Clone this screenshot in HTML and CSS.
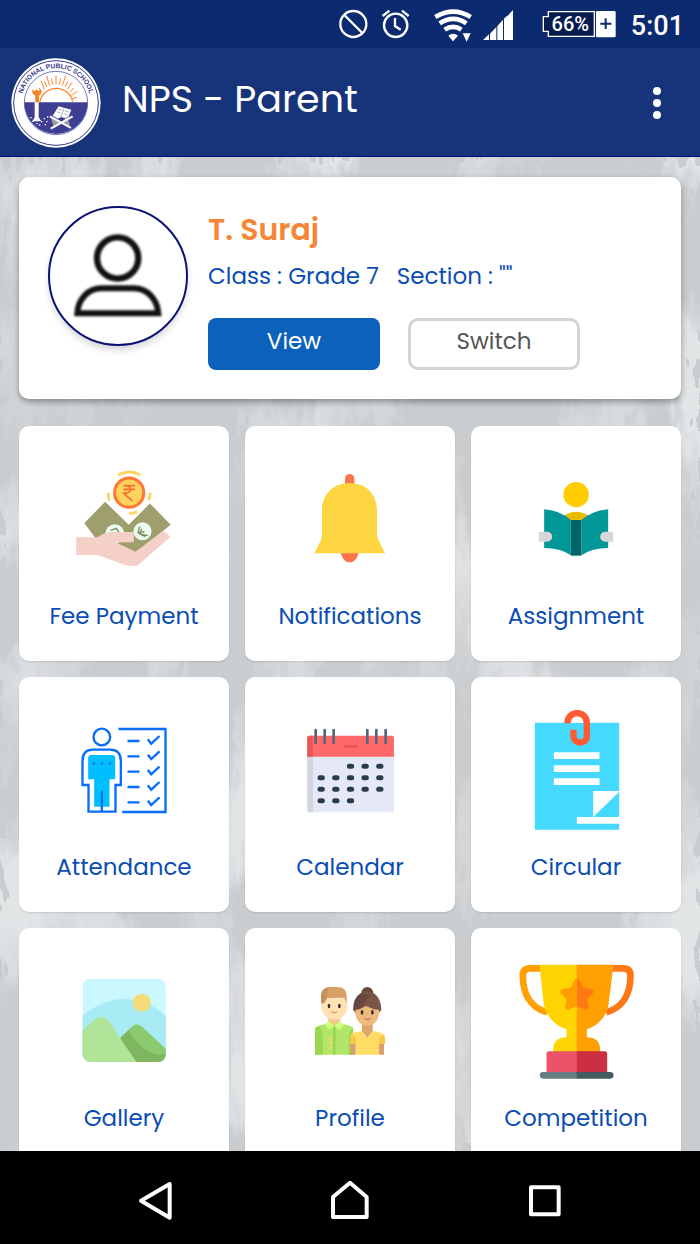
FILE: index.html
```html
<!DOCTYPE html>
<html lang="en">
<head>
<meta charset="utf-8">
<meta name="viewport" content="width=device-width, initial-scale=1">
<title>NPS - Parent</title>
<link rel="stylesheet" href="styles.css">
</head>
<body class="app">
<div class="status">
  <svg class="status-icon" viewBox="24 24 96 102" width="32" height="34" fill="none" stroke="#fff" stroke-width="7"><circle cx="70" cy="72" r="39"/><path d="M43 45l54 54"/></svg>
  <svg class="status-icon" viewBox="150 24 96 102" width="32" height="34" fill="none" stroke="#fff" stroke-width="7"><circle cx="197" cy="76" r="35"/><path d="M195 54v24l17 11M158 48l20-16M236 48l-20-16"/></svg>
  <svg class="status-icon status-wifi" viewBox="309 24 120 102" width="40" height="34"><g fill="none" stroke="#fff" stroke-width="14"><path d="M316 51q54-32 106 0"/><path d="M329 70q41-27 80 0"/><path d="M344 89q26-17 50 0"/></g><path d="M355 107q14-12 29 0l-15 17zM398 100h24l-12 25z" fill="#fff"/></svg>
  <svg class="status-icon" viewBox="459 24 90 102" width="30" height="34" fill="#fff"><path d="M459 120l18-17v17zM480 101l19-20v39h-19zM502 78l17-19v61h-17zM522 56l8-8v72h-8zM530 50l19-20v90h-22V56z"/></svg>
  <svg class="status-icon status-battery" viewBox="633 24 228 102" width="76" height="34"><path d="M655 35h138v74H655V94h-15V50h15z" fill="#071c4e" stroke="#fff" stroke-width="4"/><rect x="798" y="33" width="59" height="79" rx="4" fill="#fff"/><path d="M811 71h33M827 55v32" stroke="#0a2a70" stroke-width="6"/><text class="battery-text" x="721" y="94" text-anchor="middle">66%</text></svg>
  <span class="clock">5:01</span>
</div>
<header class="header">
  <svg class="logo" viewBox="15 22 276 276" width="92" height="92" role="img" aria-label="National Public School">
    <circle cx="153" cy="160" r="134" fill="#fff"/>
    <circle cx="153" cy="160" r="127" fill="none" stroke="#34378c" stroke-width="3"/>
    <path id="arc" d="M52 184A104 104 0 1 1 254 184" fill="none"/>
    <text class="logo-text"><textPath href="#arc" startOffset="50%" text-anchor="middle">NATIONAL PUBLIC SCHOOL</textPath></text>
    <circle cx="153" cy="160" r="95" fill="#fff"/>
    <circle cx="153" cy="160" r="95" fill="none" stroke="#34378c" stroke-width="2"/>
    <path d="M58 158h190a95 95 0 0 1-190 0z" fill="#3e3f93"/>
    <g fill="none" stroke="#ff8427" stroke-width="3"><path d="M105 156a50 50 0 0 1 98 0" stroke-width="4"/><path d="M111 127l-9-12M118 119l-10-26M126 112l-8-17M134 108l-9-29M143 105l-4-18M153 104V78M163 105l4-18M172 108l10-29M180 112l9-17M188 119l13-21M195 127l11-12M199 137l18-12M202 147l14-4"/></g>
    <path d="M82 119l7 6 5-6 6 5 8-5v14l-6 5v20H91v-20l-9-7z" fill="#f58220"/>
    <path d="M89 158h12v45l8 12H82l7-12z" fill="#fff"/>
    <path d="M143 198l18-28 18 5 20 5-11 27-20-5-9 5z" fill="#fff"/>
    <path d="M177 177l-10 27M161 179l9 2M157 187l9 2M181 184l9 3M178 192l9 3" stroke="#777a9c" stroke-width="2"/>
    <path d="M137 202l10 34 24-16 25 14-8-34-17 16z" fill="#9b9ca6"/>
    <path d="M135 200l63 35M203 200l-66 37" stroke="#fff" stroke-width="6"/>
    <path d="M76 204h4M82 215h4M94 222h4M108 216h4M119 225h4M116 207h4M124 216h4M102 226h4M126 202h4" stroke="#fff" stroke-width="4"/>
  </svg>
  <h1 class="title">NPS - Parent</h1>
  <button class="menu" type="button" aria-label="Menu"><svg viewBox="0 0 12 36" width="12" height="36" fill="#fff"><circle cx="6" cy="6" r="4"/><circle cx="6" cy="18" r="4"/><circle cx="6" cy="30" r="4"/></svg></button>
</header>
<div class="stage">
  <svg class="texture" width="100%" height="100%" aria-hidden="true">
    <filter id="plaster" x="0" y="0" width="100%" height="100%">
      <feTurbulence type="fractalNoise" baseFrequency="0.011 0.006" numOctaves="2" seed="8" result="patch"/>
      <feTurbulence type="fractalNoise" baseFrequency="0.12 0.04" numOctaves="2" seed="3" result="rough"/>
      <feDisplacementMap in="patch" in2="rough" scale="44" xChannelSelector="R" yChannelSelector="G"/>
      <feColorMatrix values="0 0 0 0 .89  0 0 0 0 .91  0 0 0 0 .92  4 0 0 0 -1.8"/>
    </filter>
    <rect width="100%" height="100%" fill="#c9cdd0"/>
    <rect width="100%" height="100%" filter="url(#plaster)" opacity=".6"/>
  </svg>
  <main class="content">
    <section class="student">
      <div class="avatar"><svg class="person" viewBox="219 218 276 262" width="92" height="88" fill="none" stroke="#111" stroke-width="19"><circle cx="356" cy="295" r="62"/><path d="M235 461c2-44 34-75 72-75h98c38 0 70 31 73 75z" stroke-width="18"/></svg></div>
      <div class="details">
        <h2 class="name">T. Suraj</h2>
        <p class="grade"><span>Class : Grade 7</span><span>Section : ""</span></p>
        <div class="actions"><button class="btn btn-view" type="button">View</button><button class="btn btn-switch" type="button">Switch</button></div>
      </div>
    </section>
    <nav class="tiles">
      <a class="tile" href="#"><svg class="art" viewBox="163.5 120 360 360">
        <path d="M287 249l71 69 63-64 62 63-105 84-110-30-43-58z" fill="#9f9f6d"/><path d="M287 249l-62 63 46 44h100l6 42 106-81-62-63-63 64z" fill="#9f9f6d"/><path d="M350 325l30 26" stroke="#8d9260" stroke-width="2"/>
        <circle cx="316" cy="345" r="29" fill="#eafbf0"/><circle cx="399" cy="337" r="27" fill="#eafbf0"/>
        <path d="M303 334l18-6 7 12M391 323l-5 17 19-1M397 329l-6 16 24 5M385 341l22 12" fill="none" stroke="#858b5d" stroke-width="4"/>
        <path d="M200 355h65q16-13 38-16h70v31h-55l60 28 84-62 21 17-100 87h-30l-88-32h-65z" fill="#f5d0c9"/>
        <circle cx="359" cy="221" r="44" fill="#ffd35d" stroke="#ff7733" stroke-width="9"/>
        <path d="M342 200h35M342 211h35M345 200c22-2 26 22 0 23h-2l26 23" fill="none" stroke="#f3702c" stroke-width="5"/>
        <path d="M326 168q34-18 67 0M296 221q0 13 4 24M422 221q0 12-5 23M359 284l24-4" fill="none" stroke="#ffd566" stroke-width="9"/></svg><span class="label">Fee Payment</span></a>
      <a class="tile" href="#"><svg class="art" viewBox="150 120 360 360"><rect x="315" y="165" width="28" height="40" rx="14" fill="#ff734d"/><path d="M302 395a27 35 0 0 0 54 0z" fill="#ff734d"/><path d="M246 274c0-48 34-82 83-82s82 34 82 82v70q0 12 6 22l18 37H223l18-36q5-10 5-22z" fill="#fdd541"/></svg><span class="label">Notifications</span></a>
      <a class="tile" href="#"><svg class="art" viewBox="826.5 120 360 360"><circle cx="1007" cy="227" r="38" fill="#ffcd00"/><path d="M970 290q37-24 74 0l-15 16h-44z" fill="#e7bd00"/><path d="M911 271q44 2 80 32v106q-31-22-80-22zM1103 271q-44 2-80 32v106q31-22 80-22z" fill="#009796"/><path d="M991 303h32v107h-32z" fill="#006568"/><path d="M895 338h25a15 15 0 0 1 0 30h-25zM1118 338h-24a15 15 0 0 0 0 30h24z" fill="#d8d6db"/></svg><span class="label">Assignment</span></a>
      <a class="tile" href="#"><svg class="art" viewBox="163.5 120 360 360"><g fill="none" stroke="#066dff" stroke-width="7"><circle cx="277" cy="201" r="25"/><path d="M327 177h141v249H338M354 213h36M354 259h36M354 305h36M354 351h36M354 397h36"/><path d="M415 208l10 13 25-23M415 254l10 13 25-23M415 300l10 13 25-23M415 346l10 13 25-23M415 392l10 13 25-23"/></g><path d="M246 255h62q9 0 9 9v64h-17v82h-46v-82h-18v-64q0-9 10-9z" fill="#00bfff"/><path d="M250 239h52q32 0 32 34v72h-16v80h-81v-80h-18v-72q0-34 31-34zM277 362v63" fill="none" stroke="#066dff" stroke-width="7"/><path d="M249 280h8M273 280h8M297 280h8" stroke="#066dff" stroke-width="7"/></svg><span class="label">Attendance</span></a>
      <a class="tile" href="#"><svg class="art" viewBox="150 120 360 360"><rect x="202" y="240" width="260" height="187" rx="6" fill="#e4e8f7"/><path d="M202 258h17v169h-11q-6 0-6-6z" fill="#d2d6e2"/><path d="M208 197h248q6 0 6 6v57H202v-57q0-6 6-6z" fill="#ff6969"/><path d="M208 197h10v63h-16v-57q0-6 6-6z" fill="#ed5455"/><path d="M314 229h36" stroke="#e65054" stroke-width="7" stroke-linecap="round"/><path d="M227 180v38M254 180v38M281 180v38M382 180v38M409 180v38M437 180v38" stroke="#526878" stroke-width="8" stroke-linecap="round"/><path d="M328 289h7M372 289h7M416 289h7M240 323h7M284 323h7M328 323h7M372 323h7M416 323h7M240 358h7M284 358h7M328 358h7M372 358h7M416 358h7M240 392h7M284 392h7M328 392h7" stroke="#2b3b4e" stroke-width="15" stroke-linecap="round"/></svg><span class="label">Calendar</span></a>
      <a class="tile" href="#"><svg class="art" viewBox="826.5 120 360 360"><path d="M883 158h253v205h-78v78h-49v20h127v18H883z" fill="#45d9ff"/><path d="M1136 365v76h-78z" fill="#45d9ff"/><path d="M940 257h137M940 296h137M940 335h137" stroke="#fff" stroke-width="20"/><path d="M981 159h49v-20h-40z" fill="#fff"/><path d="M981 160c0-41 58-41 58 0v38c0 26-40 26-40 0v-19" fill="none" stroke="#ff5a32" stroke-width="19"/></svg><span class="label">Circular</span></a>
      <a class="tile" href="#"><svg class="art" viewBox="163.5 123 360 360"><clipPath id="frame"><rect x="219" y="176" width="250" height="250" rx="24"/></clipPath><g clip-path="url(#frame)"><path d="M219 176h250v250H219z" fill="#cbf7ff"/><path d="M210 295q65-58 134-58t134 58v140H210z" fill="#a9ebf4"/><circle cx="397" cy="248" r="27" fill="#f4db78"/><path d="M330 356l37-36q15-15 31 0l80 75v40h-95z" fill="#8cca72"/><path d="M330 356l28-27q40 80 111 74v32h-90z" fill="#7fb761"/><path d="M210 341l45-42c15-12 33-8 45 6l32 50 55 80H210z" fill="#b0e599"/></g></svg><span class="label">Gallery</span></a>
      <a class="tile" href="#"><svg class="art" viewBox="150 123 360 360">
        <path d="M265 285h36v28l-18 15-18-15z" fill="#f5c98e"/><path d="M244 235h76l2 25c-2 25-20 39-39 39s-37-14-39-39z" fill="#ffe1b2"/><path d="M243 250v-22q0-27 32-27h17q28 0 28 27v22l-8-17-53 2-5 15z" fill="#d9a066"/><path d="M243 248v-20q1-24 26-27-8 8-8 34l-10 15z" fill="#c78f58"/>
        <path d="M225 404v-76q0-10 32-16l8-8 18 14 17-14 8 8q32 6 32 16v76z" fill="#b2e66b"/><path d="M225 404v-76q0-8 13-9 11 15 11 38v47zM326 404v-59l13-26v85z" fill="#9bd750"/><path d="M283 318v86" stroke="#95d052" stroke-width="6"/><path d="M255 315l10-12 18 14-14 13zM312 315l-12-12-17 14 14 13z" fill="#d0ff80"/><path d="M267 355h9M267 370h9M267 385h9" stroke="#f2d75e" stroke-width="8"/>
        <g fill="#3c302c"><ellipse cx="267" cy="258" rx="4" ry="7"/><ellipse cx="298" cy="258" rx="4" ry="7"/></g><path d="M274 274q9 9 17 0" fill="none" stroke="#d69b73" stroke-width="4"/>
        <path d="M366 310h32v24l-16 20-16-20z" fill="#dda66b"/><circle cx="382" cy="219" r="18" fill="#68473f"/><path d="M340 270c0-74 84-74 84 0l-9 10h-66z" fill="#7b5548"/><path d="M340 270q-2-36 23-51l26 5q-18 28-40 57z" fill="#68473f"/><path d="M346 270q18-3 32-12 17 9 39 12c2 30-15 47-35 47s-38-17-36-47z" fill="#edbb7d"/>
        <g fill="#3c302c"><ellipse cx="366" cy="277" rx="4" ry="7"/><ellipse cx="397" cy="277" rx="4" ry="7"/></g><path d="M373 294q10 9 18 0" fill="none" stroke="#c77f58" stroke-width="4"/><path d="M331 366h16v38h-16zM417 366h15v38h-15z" fill="#d99f6c"/><path d="M330 372v-20q0-15 35-19l17 21 17-21q36 4 36 19v20h-18v32h-69v-32z" fill="#ffdc65"/><path d="M330 372v-20l5-7 13 7v20zM435 372v-20l-5-7-13 7v20z" fill="#f5c849"/></svg><span class="label">Profile</span></a>
      <a class="tile" href="#"><svg class="art" viewBox="826.5 123 360 360"><path d="M905 145h-36q-22 0-22 22c0 55 24 96 73 110" fill="none" stroke="#ff9f00" stroke-width="20"/><path d="M1112 145h36q22 0 22 22c0 55-24 96-73 110" fill="none" stroke="#ff7816" stroke-width="20"/><path d="M897 134h112v262h-71v-10q3-34 40-34v-24c-40-13-68-47-70-90z" fill="#ffd400"/><path d="M1119 134h-111v262h71v-10q-3-34-40-34v-24c40-13 65-47 67-90z" fill="#ff9f00"/><path d="M1009 176q7 0 10 9l9 18 21 3c11 2 12 11 5 17l-14 15 4 21c1 9-7 13-15 8l-20-9z" fill="#ff7816"/><path d="M1009 176q-7 0-10 9l-9 18-21 3c-11 2-12 11-5 17l14 15-4 21c-1 9 7 13 15 8l20-9z" fill="#ff9f00"/><path d="M918 460v-59q0-7 7-7h84v66z" fill="#ed5368"/><path d="M1100 460v-59q0-7-7-7h-85v66z" fill="#cc2e42"/><path d="M1009 456h-101a10 10 0 0 0 0 20h101z" fill="#687c84"/><path d="M1008 456h101a10 10 0 0 1 0 20h-101z" fill="#455a60"/></svg><span class="label">Competition</span></a>
    </nav>
  </main>
</div>
<footer class="navbar">
  <button class="nav-btn" type="button" aria-label="Back"><svg viewBox="105 122 120 120" width="40" height="40"><path d="M123 181l86-50v101z"/></svg></button>
  <button class="nav-btn" type="button" aria-label="Home"><svg viewBox="690 122 120 120" width="40" height="40"><path d="M699 230v-60l51-43 50 43v60z"/></svg></button>
  <button class="nav-btn" type="button" aria-label="Recent apps"><svg viewBox="1275 122 120 120" width="40" height="40"><path d="M1293 141h83v81h-83z"/></svg></button>
</footer>
</body>
</html>
```
FILE: styles.css
```css
* { box-sizing: border-box; }
.app { margin: 0; height: 100vh; display: flex; flex-direction: column; overflow: hidden; font-family: Poppins, Inter, "Liberation Sans", sans-serif; color: #0a4db5; background: #000; }
.status { flex: none; height: 48px; padding: 8px 16px 0 0; display: flex; justify-content: flex-end; gap: 10px; background: #0b2a70; color: #fff; }
.status-icon { flex: none; }
.status-wifi { margin-left: 11px; }
.status-battery { margin-left: 18px; }
.battery-text { font: 500 60px Roboto, sans-serif; fill: #fff; }
.clock { margin-left: 4px; font: 500 27px/36px Roboto, sans-serif; }
.header { flex: none; height: 109px; padding: 2px 19px 0 10px; display: flex; align-items: center; background: #17347a; border-bottom: 1px solid #001080; }
.logo { flex: none; }
.logo-text { font: 700 20px "Liberation Sans", sans-serif; fill: #34378c; }
.title { flex: 1; margin: 0; padding: 0 0 8px 20px; font-size: 38px; line-height: 48px; font-weight: 400; color: #fff; }
.menu { width: 48px; height: 48px; padding: 0; border: 0; background: none; display: grid; place-items: center; }
.stage { flex: 1; min-height: 0; position: relative; box-shadow: inset 0 6px 6px -3px #6f757a; }
.texture { position: absolute; inset: 0; z-index: -1; }
.app, .stage { isolation: isolate; }
.content { height: 100%; padding: 20px 19px; overflow-y: auto; scrollbar-width: none; }
.student { display: flex; gap: 20px; padding: 29px; border-radius: 10px; background: #fff; box-shadow: 0 3px 6px rgba(0, 0, 0, .35); }
.avatar { flex: none; width: 140px; height: 140px; border: 2px solid #0a1173; border-radius: 50%; display: grid; place-items: center; box-shadow: 0 5px 8px -2px rgba(0, 0, 0, .2); }
.person { filter: blur(1px); }
.details { flex: 1; min-width: 0; }
.name { margin: 4px 0 0; font-size: 30px; line-height: 40px; font-weight: 600; color: #f58634; }
.grade { margin: 10px 0 0; display: flex; gap: 18px; font-size: 23px; line-height: 32px; font-weight: 400; }
.actions { display: flex; gap: 28px; margin-top: 26px; }
.btn { width: 172px; height: 52px; padding: 0 0 6px; border: 0; border-radius: 8px; font: 400 23px/32px Poppins, Inter, sans-serif; }
.btn-view { background: #0b61bb; color: #fff; }
.btn-switch { border: 3px solid #d4d4d4; border-radius: 10px; background: #fff; color: #555; }
.tiles { display: grid; grid-template-columns: repeat(3, 1fr); gap: 16px; margin-top: 27px; }
.tile { display: flex; flex-direction: column; align-items: center; padding: 33px 0 29px; border-radius: 10px; background: #fff; color: inherit; text-decoration: none; box-shadow: 0 1px 2px rgba(0, 0, 0, .12); }
.art { width: 120px; height: 120px; }
.label { margin-top: 21px; font-size: 23px; line-height: 32px; font-weight: 400; white-space: nowrap; }
.navbar { flex: none; height: 93px; padding-top: 6px; display: flex; justify-content: center; background: #000; }
.nav-btn { width: 195px; padding: 0; border: 0; background: none; display: grid; place-items: center; }
.nav-btn path { fill: none; stroke: #fff; stroke-width: 12; stroke-linejoin: round; }
```
